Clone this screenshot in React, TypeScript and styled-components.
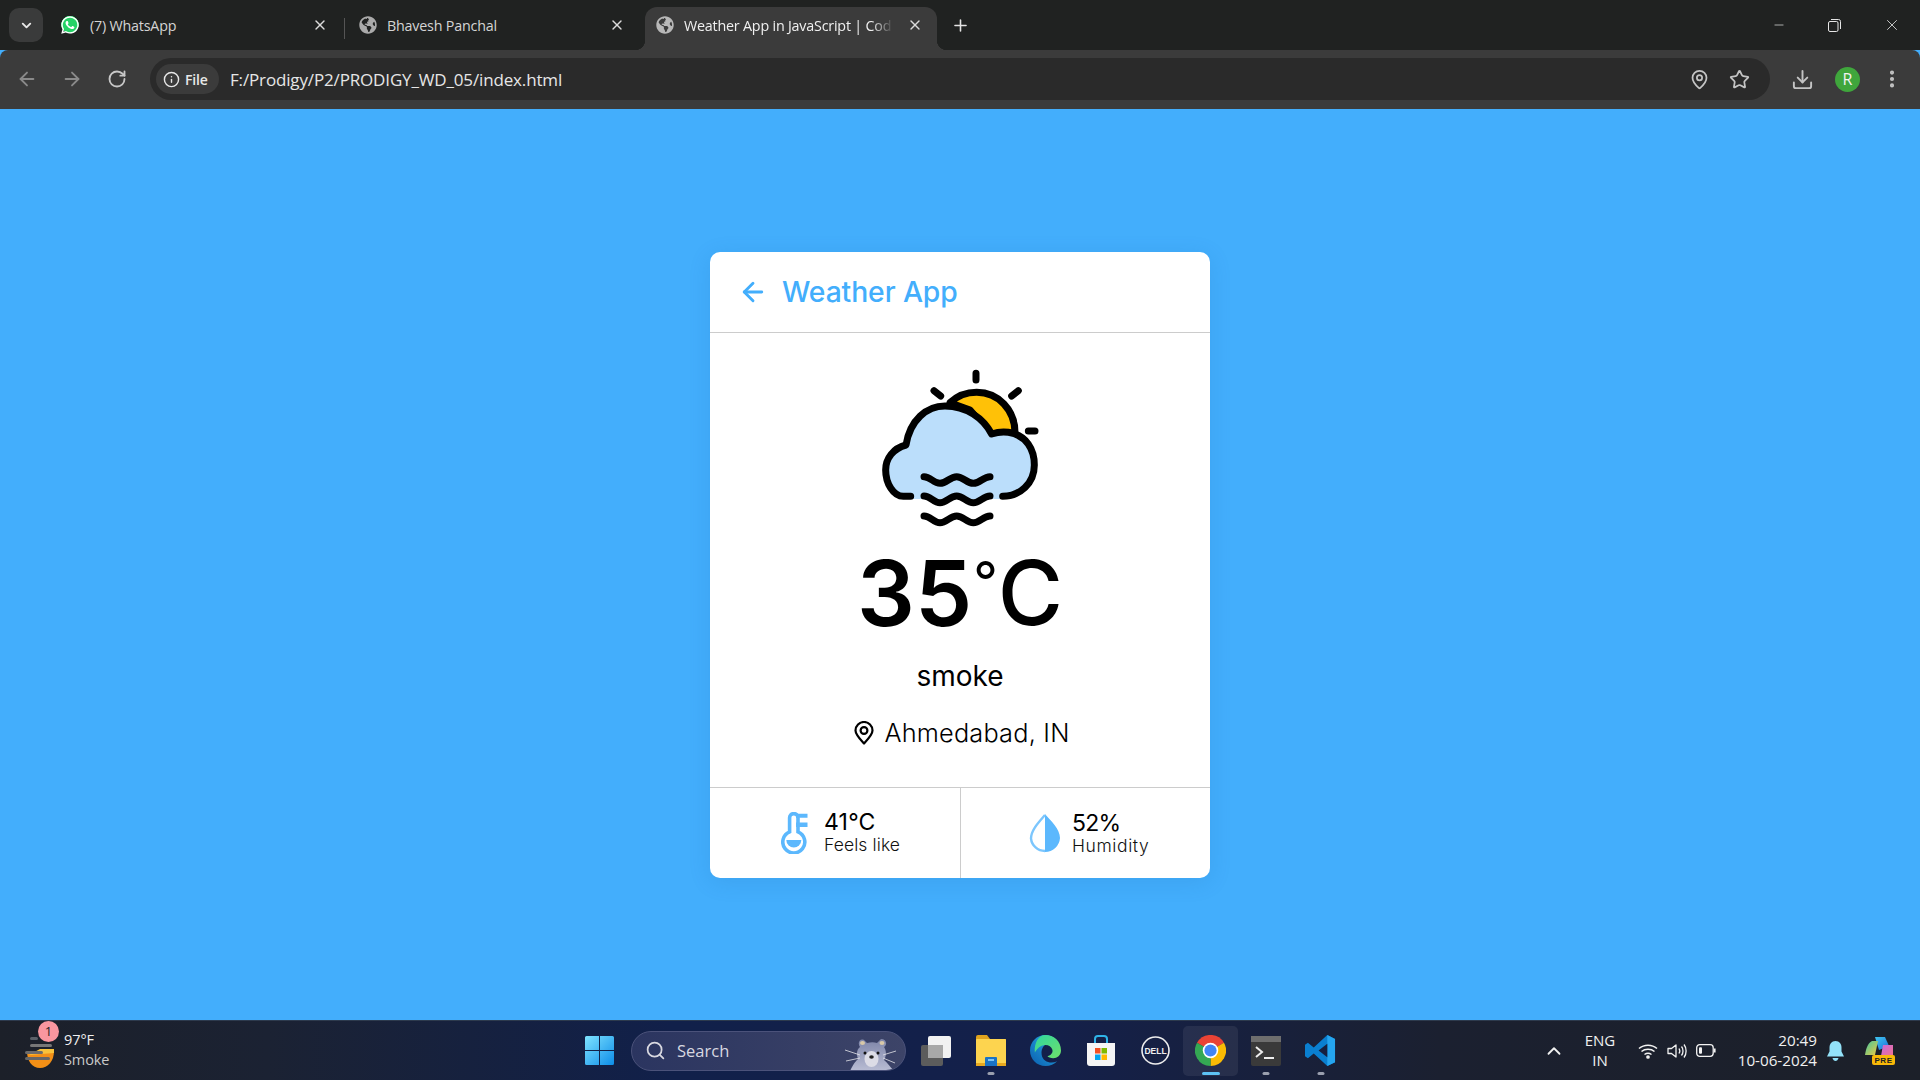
import React from "react";
import styled, { createGlobalStyle } from "styled-components";
import { FaGlobeAmericas, FaWhatsapp } from "react-icons/fa";
import { ArrowLeft, ArrowRight, RotateCw, Info, X, Plus, ChevronDown, Minus, MapPin, Star, Download, EllipsisVertical, Search, ChevronUp } from "lucide-react";

const Global = createGlobalStyle`
  html, body { margin: 0; padding: 0; background: #43aefc; }
  * { box-sizing: border-box; }
`;
const Page = styled.div`
  width: 1920px; height: 1080px; display: flex; flex-direction: column; overflow: hidden;
  font-family: "Open Sans", "Noto Sans", sans-serif;
`;
const TabStrip = styled.div`
  height: 50px; background: #202221; display: flex; align-items: flex-end; padding-left: 9px; flex: none;
`;
const TabSearch = styled.div`
  width: 34px; height: 34px; margin: 0 7px 8px 0; border-radius: 10px; background: #3a3b3b; color: #e8e8e8;
  display: flex; align-items: center; justify-content: center;
`;
const Tab = styled.div<{ $w: number; $active?: boolean; $pad: number }>`
  position: relative; width: ${p => p.$w}px; height: 43px; display: flex; align-items: center;
  padding: 0 0 7px ${p => p.$pad}px; color: ${p => (p.$active ? "#f0f0f0" : "#d4d4d4")}; font-size: 14.3px; letter-spacing: -0.2px;
  background: ${p => (p.$active ? "#3b3b3b" : "transparent")};
  border-radius: 12px 12px 0 0;
  ${p => p.$active && `
    &::before, &::after { content: ""; position: absolute; bottom: 0; width: 10px; height: 10px; }
    &::before { left: -10px; background: radial-gradient(circle at 0 0, transparent 10px, #3b3b3b 10.5px); }
    &::after { right: -10px; background: radial-gradient(circle at 100% 0, transparent 10px, #3b3b3b 10.5px); }
  `}
`;
const WaBadge = styled.span`
  width: 20px; height: 20px; flex: none; display: flex; align-items: center; justify-content: center; color: #fff;
  background: radial-gradient(circle at 50% 48%, #25d366 0 8.6px, transparent 9px);
`;
const TabTitle = styled.span<{ $w: number; $fade?: boolean }>`
  width: ${p => p.$w}px; margin-left: 10px; white-space: nowrap; flex: none;
  ${p => p.$fade && `-webkit-mask-image: linear-gradient(90deg, #000 84%, transparent 94%); mask-image: linear-gradient(90deg, #000 84%, transparent 94%);`}
`;
const TabClose = styled.span`
  display: flex; color: #dcdcdc; flex: none;
`;
const TabSep = styled.div`
  width: 1px; height: 21px; background: #555; margin-bottom: 11px; flex: none;
`;
const NewTab = styled.div`
  margin: 0 0 15px 14px; color: #e4e4e4; display: flex; width: 20px;
`;
const WinControls = styled.div`
  margin-left: auto; display: flex; align-items: center; height: 50px; color: #e6e6e6; padding-right: 19px; gap: 42px;
`;
const Toolbar = styled.div`
  height: 59px; background: #3b3b3b; display: flex; align-items: center; padding: 0 16px 1px 16px;
  border-radius: 8px 8px 0 0; flex: none;
`;
const NavBtn = styled.div<{ $w: number; $dim?: boolean }>`
  width: ${p => p.$w}px; display: flex; color: ${p => (p.$dim ? "#8a8a8a" : "#c8c8c8")}; flex: none;
`;
const Omnibox = styled.div`
  width: 1620px; height: 42px; background: #2a2a2a; border-radius: 21px; display: flex; align-items: center;
  padding: 0 16px 0 6px; flex: none; margin-right: 21px;
`;
const FileChip = styled.div`
  width: 63px; height: 30px; background: #3b3b3b; border-radius: 15px; display: flex; align-items: center; gap: 5px;
  padding-left: 7px; color: #e8e8e8; font-size: 14px; font-weight: 600; letter-spacing: -0.2px; flex: none;
`;
const Url = styled.span`
  margin-left: 11px; color: #e6e6e6; font-size: 17px; letter-spacing: -0.15px; white-space: nowrap;
`;
const OmniRight = styled.div`
  margin-left: auto; display: flex; align-items: center; gap: 19px; color: #c4c4c4; padding-right: 4px;
`;
const ToolRight = styled.div`
  display: flex; align-items: center; color: #c4c4c4; gap: 21px;
`;
const Avatar = styled.div`
  width: 25px; height: 25px; border-radius: 50%; background: #3fa63c; color: #f2f2f2; font-size: 16px;
  display: flex; align-items: center; justify-content: center;
`;
const Stage = styled.main`
  flex: 1; background: #43aefc; display: flex; justify-content: center; align-items: flex-start; padding-top: 143px;
`;
const Card = styled.section`
  width: 500px; height: 626px; background: #fff; border-radius: 10px; overflow: hidden; display: flex; flex-direction: column;
  box-shadow: 0 4px 22px rgba(20, 90, 160, .14); font-family: "Inter", sans-serif;
`;
const CardHead = styled.header`
  height: 81px; flex: none; border-bottom: 1px solid #ccc; display: flex; align-items: center; padding: 0 0 0 28px; gap: 14px;
  color: #43aefc;
`;
const Title = styled.h1`
  margin: 0; font-size: 28.3px; line-height: 1; font-weight: 500; letter-spacing: -0.1px;
`;
const CardBody = styled.div`
  flex: 1; display: flex; flex-direction: column; align-items: center; padding-top: 27px;
`;
const Illustration = styled.svg`
  display: block; width: 200px; height: 175px; flex: none; margin-left: -1px;
`;
const Temp = styled.div`
  font-size: 91px; line-height: 104px; font-weight: 600; color: #000; margin-top: 6px; white-space: nowrap; display: flex; align-items: flex-start;
`;
const DegreeMark = styled.span`
  font-size: 54px; font-weight: 400; line-height: 104px; margin: -12px 0 0 1px;
`;
const TempUnit = styled.span`
  font-size: 89px; font-weight: 500;
`;
const Desc = styled.div`
  font-size: 28px; line-height: 36px; margin-top: 13px; color: #000; font-weight: 400;
`;
const Place = styled.div`
  display: flex; align-items: center; gap: 9px; font-size: 25.3px; line-height: 32px; margin-top: 23px; color: #000; font-weight: 300; letter-spacing: 0.2px; padding-left: 3px;
`;
const Stats = styled.div`
  height: 91px; flex: none; border-top: 1px solid #ccc; display: grid; grid-template-columns: 250px 1px 249px;
`;
const Divider = styled.div`
  background: #ccc;
`;
const Stat = styled.div<{ $gap: number; $left: number }>`
  display: flex; align-items: center; gap: ${p => p.$gap}px; padding-left: ${p => p.$left}px;
`;
const StatText = styled.div<{ $drop?: number }>`
  display: flex; flex-direction: column; margin-top: ${p => p.$drop ?? 0}px;
`;
const StatValue = styled.div<{ $spacing: number }>`
  font-size: 23px; line-height: 22px; font-weight: 400; color: #000; letter-spacing: ${p => p.$spacing}px;
`;
const StatLabel = styled.div<{ $spacing: number }>`
  font-size: 17.5px; line-height: 23px; color: #111; font-weight: 300; letter-spacing: ${p => p.$spacing}px;
`;
const Taskbar = styled.footer`
  height: 60px; flex: none; display: flex; align-items: center; color: #f0f0f0; position: relative;
  border-top: 1px solid #2d3a4d;
  background: linear-gradient(90deg, #1c2029 0%, #1b2233 14%, #11204a 35%, #14204a 55%, #1b2030 75%, #1c2029 100%);
`;
const WeatherWidget = styled.div`
  width: 585px; flex: none; display: flex; align-items: center; padding-left: 24px; gap: 8px; position: relative;
`;
const Badge = styled.span`
  position: absolute; left: 38px; top: -11px; width: 21px; height: 21px; border-radius: 50%; background: #f9969f; color: #222;
  font-size: 13px; display: flex; align-items: center; justify-content: center;
`;
const WeatherText = styled.div`
  font-size: 14.5px; line-height: 20px; letter-spacing: -0.1px; color: #f0f0f0; margin-top: -2px;
`;
const WeatherSub = styled.div`
  color: #c8c8c8;
`;
const SearchPill = styled.div`
  width: 275px; height: 40px; margin-left: 17px; border-radius: 20px; background: linear-gradient(90deg,#2b3560,#3d4468);
  border: 1px solid #4b527a; display: flex; align-items: center; padding-left: 13px; gap: 11px; font-size: 16.5px; color: #d8d8e0; flex: none; position: relative; overflow: hidden;
`;
const Mascot = styled.svg`
  position: absolute; right: 9px; top: 5px;
`;
const AppRow = styled.div`
  display: flex; align-items: center; margin-left: 2px; flex: none;
`;
const AppSlot = styled.div<{ $active?: boolean }>`
  width: 55px; height: 50px; display: flex; align-items: center; justify-content: center; position: relative; border-radius: 5px;
  ${p => p.$active && `background: rgba(255,255,255,.07);`}
`;
const Dot = styled.span<{ $active?: boolean }>`
  position: absolute; bottom: 1px; left: 50%; transform: translateX(-50%); height: 3px; border-radius: 2px;
  width: ${p => (p.$active ? 18 : 7)}px; background: ${p => (p.$active ? "#5dc2f5" : "#9a9fae")};
`;
const Tray = styled.div`
  margin-left: auto; display: flex; align-items: center; height: 100%; padding-right: 25px; flex: none;
`;
const Lang = styled.div`
  width: 50px; text-align: center; font-size: 15px; line-height: 20px; margin: -2px 0 0 10px;
`;
const TrayIcons = styled.div`
  display: flex; align-items: center; gap: 9px; margin-left: 13px;
`;
const Clock = styled.div`
  text-align: right; font-size: 15.200px; line-height: 20px; width: 90px; margin: -2px 0 0 11px; white-space: nowrap;
`;
const TrayGap = styled.div<{ $gap: number }>`
  display: flex; margin-left: ${p => p.$gap}px;
`;

const WeatherIllustration = () => (
  <Illustration viewBox="0 0 600 525" fill="none" stroke="#000" strokeWidth="21" strokeLinecap="round" strokeLinejoin="round">
    <path d="M270 128C295 105 325 97 350 97C415 97 465 150 465 218L395 225L330 150Z" fill="#ffc107" />
    <path d="M130 417C100 410 77 370 77 330C77 295 100 265 138 255C150 180 200 138 255 138C320 138 370 175 395 222C410 217 430 215 445 217C500 225 523 270 523 315C523 370 480 417 428 417Z" fill="#bbdefb" stroke="none" />
    <path d="M152 409H130C100 409 77 370 77 330C77 295 100 265 138 255C150 180 200 138 255 138C320 138 370 175 395 222C410 217 430 215 445 217C500 225 523 270 523 315C523 370 480 409 428 409" />
    <path d="M348 40V60M222 92L242 108M475 92L455 108M505 213H525" />
    {[350, 408, 468].map(y => (
      <path key={y} d={`M192 ${y}C212 ${y} 220 ${y + 20} 240 ${y + 20}C260 ${y + 20} 270 ${y} 290 ${y}C310 ${y} 320 ${y + 20} 340 ${y + 20}C360 ${y + 20} 370 ${y} 390 ${y}`} />
    ))}
  </Illustration>
);
const PinIcon = () => (
  <svg width="22" height="24" viewBox="0 0 22 24" fill="none" stroke="#000" strokeWidth="2.2">
    <path d="M11 22.500C6 17 2.500 13.500 2.500 9.500A8.500 8.500 0 0 1 19.500 9.500C19.500 13.500 16 17 11 22.500Z" strokeLinejoin="round" />
    <circle cx="11" cy="9.500" r="3.400" />
  </svg>
);
const Thermo = () => (
  <svg width="27" height="42" viewBox="0 0 27 42" fill="none">
    <path d="M8.600 19.800V5.800a4.200 4.200 0 0 1 8.400 0V19.800a11 11 0 1 1-8.400 0Z" stroke="#5cb8fd" strokeWidth="3.600" />
    <path d="M15 1.700H26.500V5.700H15ZM15 10.500H26.500V15H15Z" fill="#5cb8fd" />
    <path d="M5.300 28H20.300A7.500 7.500 0 0 1 5.300 28Z" fill="#5cb8fd" />
  </svg>
);
const Drop = () => (
  <svg width="32" height="40" viewBox="0 0 32 40">
    <path d="M16 1C22 8 31 16 31 25A15 15 0 0 1 16 39Z" fill="#5cb8fd" />
    <path d="M16 2C10 9 2 17 2 25.500A14 14 0 0 0 16 38" fill="none" stroke="#7cc6fd" strokeWidth="2.400" />
  </svg>
);
const WinLogo = () => (
  <svg width="29" height="29" viewBox="0 0 29 29">
    <defs>
      <linearGradient id="w" x1="0" y1="0" x2="1" y2="1"><stop offset="0" stopColor="#7fe3ff" /><stop offset="1" stopColor="#0d8de8" /></linearGradient>
    </defs>
    <path d="M0 1.500a1.500 1.500 0 0 1 1.500-1.500H14V14H0ZM15 0H27.500a1.500 1.500 0 0 1 1.500 1.500V14H15ZM0 15H14V29H1.500A1.500 1.500 0 0 1 0 27.500ZM15 15H29V27.500a1.500 1.500 0 0 1-1.500 1.500H15Z" fill="url(#w)" />
  </svg>
);
const TaskView = () => (
  <svg width="32" height="32" viewBox="0 0 32 32">
    <rect x="1" y="10" width="22" height="21" rx="2" fill="#5c5c5c" />
    <rect x="8" y="1" width="23" height="22" rx="2" fill="#f2f2f2" />
    <rect x="8" y="10" width="15" height="13" fill="#a8a8a8" />
  </svg>
);
const FolderIcon = () => (
  <svg width="32" height="34" viewBox="0 0 32 34">
    <path d="M1 3a2 2 0 0 1 2-2h9l3 4h15a1 1 0 0 1 1 1v3H1Z" fill="#e0a31e" />
    <rect x="1" y="5" width="30" height="27" rx="1" fill="#fdd44f" />
    <rect x="1" y="29" width="30" height="3" fill="#e7a81f" />
    <path d="M10 24a1 1 0 0 1 1-1h10a1 1 0 0 1 1 1v8H10Z" fill="#1a73c4" />
    <rect x="13" y="25" width="6" height="2" fill="#7cc4f4" />
  </svg>
);
const EdgeIcon = () => (
  <svg width="31" height="31" viewBox="0 0 32 32">
    <defs>
      <linearGradient id="e1" x1="0" y1="1" x2="1" y2="0"><stop offset="0" stopColor="#0a5fb0" /><stop offset="1" stopColor="#2bb0e8" /></linearGradient>
      <linearGradient id="e2" x1="0" y1="0" x2="1" y2="1"><stop offset="0" stopColor="#2fd6a0" /><stop offset="1" stopColor="#6fe06a" /></linearGradient>
    </defs>
    <path d="M16 0C7 0 0 7 0 16C0 25 7 32 16 32C21 32 25 30 28 27C22 30 13 28 12 20C11 13 16 8 21 8C27 8 30 12 31 13C29 5 23 0 16 0Z" fill="url(#e1)" />
    <path d="M16 0C24 0 32 6 32 16C32 21 28 24 24 24C21 24 19 23 18 22C22 21 24 18 23 15C22 11 17 9 12 11C8 13 6 16 5 18C4 8 9 0 16 0Z" fill="url(#e2)" />
  </svg>
);
const StoreIcon = () => (
  <svg width="30" height="32" viewBox="0 0 30 32">
    <path d="M9 8V4a3 3 0 0 1 3-3h6a3 3 0 0 1 3 3v4" fill="none" stroke="#2fb4e8" strokeWidth="2" />
    <path d="M1 8h28v20a3 3 0 0 1-3 3H4a3 3 0 0 1-3-3Z" fill="#f5f5f5" />
    <rect x="9" y="13" width="5.500" height="5.500" fill="#f25022" />
    <rect x="15.500" y="13" width="5.500" height="5.500" fill="#7fba00" />
    <rect x="9" y="19.500" width="5.500" height="5.500" fill="#00a4ef" />
    <rect x="15.500" y="19.500" width="5.500" height="5.500" fill="#ffb900" />
  </svg>
);
const DellIcon = () => (
  <svg width="29" height="29" viewBox="0 0 29 29">
    <circle cx="14.500" cy="14.500" r="13.500" fill="none" stroke="#eee" strokeWidth="1.600" />
    <text x="14.500" y="17.500" fontSize="8.500" fontWeight="700" textAnchor="middle" fill="#eee" fontFamily="Liberation Sans, sans-serif">DELL</text>
  </svg>
);
const ChromeIcon = () => (
  <svg width="31" height="31" viewBox="0 0 32 32">
    <path d="M16 16L2.100 8A16 16 0 0 1 29.900 8Z" fill="#ea4335" />
    <path d="M16 16L29.900 8A16 16 0 0 1 16 32Z" fill="#fbbc04" />
    <path d="M16 16L16 32A16 16 0 0 1 2.100 8Z" fill="#34a853" />
    <circle cx="16" cy="16" r="8" fill="#fff" />
    <circle cx="16" cy="16" r="6.300" fill="#4285f4" />
  </svg>
);
const TerminalIcon = () => (
  <svg width="30" height="32" viewBox="0 0 30 32">
    <rect x="0" y="1" width="30" height="30" rx="2" fill="#3a3a3a" />
    <rect x="0" y="1" width="30" height="6" fill="#6e6e6e" />
    <path d="M5 12l6 5-6 5" fill="none" stroke="#eee" strokeWidth="2" />
    <rect x="13" y="22" width="10" height="2" fill="#eee" />
  </svg>
);
const VSCodeIcon = () => (
  <svg width="31" height="31" viewBox="0 0 32 32">
    <path d="M23 0L31 4V28L23 32L9 19L3 24L0 22V10L3 8L9 13Z" fill="#0a7fd0" />
    <path d="M23 0L31 4V28L23 32Z" fill="#25a5ef" />
    <path d="M23 9L14 16L23 23Z" fill="#16203f" />
  </svg>
);
const SmokeIcon = () => (
  <svg width="32" height="36" viewBox="0 0 32 36">
    <path d="M3 18H30C30 28 24 35 16 35C8 35 3 28 3 18Z" fill="#f28f16" />
    <path d="M16 16L30 16V20L5 22Z" fill="#f7c23c" />
    <rect x="6" y="4" width="8" height="3" rx="1.500" fill="#5b6068" />
    <rect x="6" y="11" width="22" height="3" rx="1.500" fill="#777" />
    <rect x="1" y="18" width="18" height="3" rx="1.500" fill="#6b6b6b" />
    <rect x="1" y="24" width="25" height="3" rx="1.500" fill="#666" />
  </svg>
);
const Restore = () => (
  <svg width="13" height="13" viewBox="0 0 13 13" fill="none" stroke="#e6e6e6">
    <rect x="0.500" y="2.500" width="9.500" height="10" rx="1.500" />
    <path d="M3 .5h7.500a2 2 0 0 1 2 2V10" />
  </svg>
);
const Wifi = () => (
  <svg width="20" height="16" viewBox="0 0 20 16" fill="none" stroke="#f2f2f2" strokeWidth="1.500">
    <path d="M1 5.500C6 1 14 1 19 5.500M3.500 8.500C7 5.500 13 5.500 16.500 8.500M6.500 11.500C8.500 10 11.500 10 13.500 11.500" />
    <circle cx="10" cy="14" r="1.100" fill="#f2f2f2" />
  </svg>
);
const Speaker = () => (
  <svg width="20" height="18" viewBox="0 0 20 18" fill="none" stroke="#f2f2f2" strokeWidth="1.300">
    <path d="M1 6.500H4.500L9 3V15L4.500 11.500H1Z" strokeLinejoin="round" />
    <path d="M12 6.500C13 8 13 10 12 11.500M14.500 4.500C16.500 7 16.500 11 14.500 13.500M17 2.500C19.800 6 19.800 12 17 15.500" />
  </svg>
);
const Battery = () => (
  <svg width="20" height="13" viewBox="0 0 20 13" fill="none" stroke="#f2f2f2" strokeWidth="1.300">
    <rect x="0.700" y="0.700" width="16.500" height="11.600" rx="3" />
    <rect x="3" y="3.300" width="3" height="6.400" fill="#f2f2f2" stroke="none" rx="1" />
    <path d="M18.700 4.500V8.500" strokeWidth="1.800" />
  </svg>
);
const Bell = () => (
  <svg width="17" height="20" viewBox="0 0 17 20">
    <path d="M8.500 0C4.500 0 2.500 3 2.500 6.500V10.500L0 15.500H17L14.500 10.500V6.500C14.500 3 12.500 0 8.500 0Z" fill="#93e2f9" />
    <path d="M5.500 17H11.500C11 19 9.800 20 8.500 20C7.200 20 6 19 5.500 17Z" fill="#93e2f9" />
  </svg>
);
const Copilot = () => (
  <svg width="30" height="30" viewBox="0 0 30 30">
    <defs>
      <linearGradient id="c1" x1="0" y1="0" x2="1" y2="1"><stop offset="0" stopColor="#3fc8f0" /><stop offset="1" stopColor="#1f6fdc" /></linearGradient>
      <linearGradient id="c2" x1="0" y1="0" x2="1" y2="1"><stop offset="0" stopColor="#c86bdc" /><stop offset="1" stopColor="#f07090" /></linearGradient>
      <linearGradient id="c3" x1="0" y1="0" x2="1" y2="1"><stop offset="0" stopColor="#3fc8a0" /><stop offset="1" stopColor="#f0c840" /></linearGradient>
    </defs>
    <path d="M10 1H20L24 10L14 14Z" fill="url(#c1)" />
    <path d="M18 9H28V20H16Z" fill="url(#c2)" />
    <path d="M7 5H13L10 19H0C1 12 3 7 7 5Z" fill="url(#c3)" />
    <rect x="7" y="19" width="23" height="10" rx="2" fill="#f8b808" />
    <text x="18.500" y="27" fontSize="8" fontWeight="700" textAnchor="middle" fill="#222" letterSpacing=".6" fontFamily="Liberation Sans, sans-serif">PRE</text>
  </svg>
);
const MascotArt = () => (
  <Mascot width="52" height="34" viewBox="0 0 52 34">
    <defs>
      <linearGradient id="m" x1="0" y1="0" x2="0" y2="1"><stop offset="0" stopColor="#7d84a8" /><stop offset="1" stopColor="#b9bdd4" /></linearGradient>
    </defs>
    <path d="M6 34C10 26 12 24 14 22C12 17 13 12 16 10C13 6 16 1 20 3L23 6C27 5 30 5 33 6L37 2C42 2 44 7 40 10C43 14 42 20 40 23C44 26 46 30 50 34Z" fill="url(#m)" />
    <ellipse cx="18.500" cy="6" rx="2.500" ry="2" fill="#d8c8a8" />
    <ellipse cx="38" cy="6" rx="2.500" ry="2" fill="#d8c8a8" />
    <ellipse cx="27.500" cy="22" rx="7" ry="8" fill="#dcdce6" />
    <circle cx="21" cy="16" r="1.500" fill="#111" /><circle cx="34" cy="16" r="1.500" fill="#111" />
    <ellipse cx="27.500" cy="20" rx="2.300" ry="1.800" fill="#222" />
    <path d="M16 18L1 13M16 21L2 24M39 18L52 14M39 21L51 26" stroke="#e4e4ea" strokeWidth=".8" />
  </Mascot>
);

export default function App() {
  return (
    <Page>
      <Global />
      <TabStrip>
        <TabSearch><ChevronDown size={15} strokeWidth={3} /></TabSearch>
        <Tab $w={294} $pad={10}>
          <WaBadge><FaWhatsapp size={20} /></WaBadge>
          <TabTitle $w={222}>(7) WhatsApp</TabTitle>
          <TabClose><X size={16} /></TabClose>
        </Tab>
        <TabSep />
        <Tab $w={300} $pad={14}>
          <FaGlobeAmericas size={18} color="#aaa" style={{ flex: "none" }} />
          <TabTitle $w={222}>Bhavesh Panchal</TabTitle>
          <TabClose><X size={16} /></TabClose>
        </Tab>
        <Tab $w={292} $pad={11} $active>
          <FaGlobeAmericas size={18} color="#b8b8b8" style={{ flex: "none" }} />
          <TabTitle $w={223} $fade>Weather App in JavaScript | Cod</TabTitle>
          <TabClose><X size={16} /></TabClose>
        </Tab>
        <NewTab><Plus size={19} strokeWidth={2} /></NewTab>
        <WinControls>
          <Minus size={14} strokeWidth={1.2} />
          <Restore />
          <X size={18} strokeWidth={1.1} />
        </WinControls>
      </TabStrip>
      <Toolbar>
        <NavBtn $w={45} $dim><ArrowLeft size={22} strokeWidth={2} /></NavBtn>
        <NavBtn $w={46} $dim><ArrowRight size={22} strokeWidth={2} /></NavBtn>
        <NavBtn $w={43}><RotateCw size={20} strokeWidth={2.2} /></NavBtn>
        <Omnibox>
          <FileChip><Info size={17} strokeWidth={2} />File</FileChip>
          <Url>F:/Prodigy/P2/PRODIGY_WD_05/index.html</Url>
          <OmniRight>
            <MapPin size={21} strokeWidth={2} />
            <Star size={21} strokeWidth={2} />
          </OmniRight>
        </Omnibox>
        <ToolRight>
          <Download size={23} strokeWidth={2} />
          <Avatar>R</Avatar>
          <EllipsisVertical size={22} strokeWidth={2.5} />
        </ToolRight>
      </Toolbar>
      <Stage>
        <Card>
          <CardHead>
            <ArrowLeft size={30} strokeWidth={2.3} />
            <Title>Weather App</Title>
          </CardHead>
          <CardBody>
            <WeatherIllustration />
            <Temp>35<DegreeMark>°</DegreeMark><TempUnit>C</TempUnit></Temp>
            <Desc>smoke</Desc>
            <Place><PinIcon />Ahmedabad, IN</Place>
          </CardBody>
          <Stats>
            <Stat $gap={16} $left={71}>
              <Thermo />
              <StatText>
                <StatValue $spacing={0.2}>41°C</StatValue>
                <StatLabel $spacing={0.1}>Feels like</StatLabel>
              </StatText>
            </Stat>
            <Divider />
            <Stat $gap={11} $left={68}>
              <Drop />
              <StatText $drop={3}>
                <StatValue $spacing={-0.8}>52%</StatValue>
                <StatLabel $spacing={0.6}>Humidity</StatLabel>
              </StatText>
            </Stat>
          </Stats>
        </Card>
      </Stage>
      <Taskbar>
        <WeatherWidget>
          <SmokeIcon />
          <Badge>1</Badge>
          <WeatherText>97°F<WeatherSub>Smoke</WeatherSub></WeatherText>
        </WeatherWidget>
        <WinLogo />
        <SearchPill>
          <Search size={21} strokeWidth={2} />Search
          <MascotArt />
        </SearchPill>
        <AppRow>
          <AppSlot><TaskView /></AppSlot>
          <AppSlot><FolderIcon /><Dot /></AppSlot>
          <AppSlot><EdgeIcon /></AppSlot>
          <AppSlot><StoreIcon /></AppSlot>
          <AppSlot><DellIcon /></AppSlot>
          <AppSlot $active><ChromeIcon /><Dot $active /></AppSlot>
          <AppSlot><TerminalIcon /><Dot /></AppSlot>
          <AppSlot><VSCodeIcon /><Dot /></AppSlot>
        </AppRow>
        <Tray>
          <ChevronUp size={22} strokeWidth={2} />
          <Lang>ENG<br />IN</Lang>
          <TrayIcons><Wifi /><Speaker /><Battery /></TrayIcons>
          <Clock>20:49<br />10-06-2024</Clock>
          <TrayGap $gap={10}><Bell /></TrayGap>
          <TrayGap $gap={21}><Copilot /></TrayGap>
        </Tray>
      </Taskbar>
    </Page>
  );
}
